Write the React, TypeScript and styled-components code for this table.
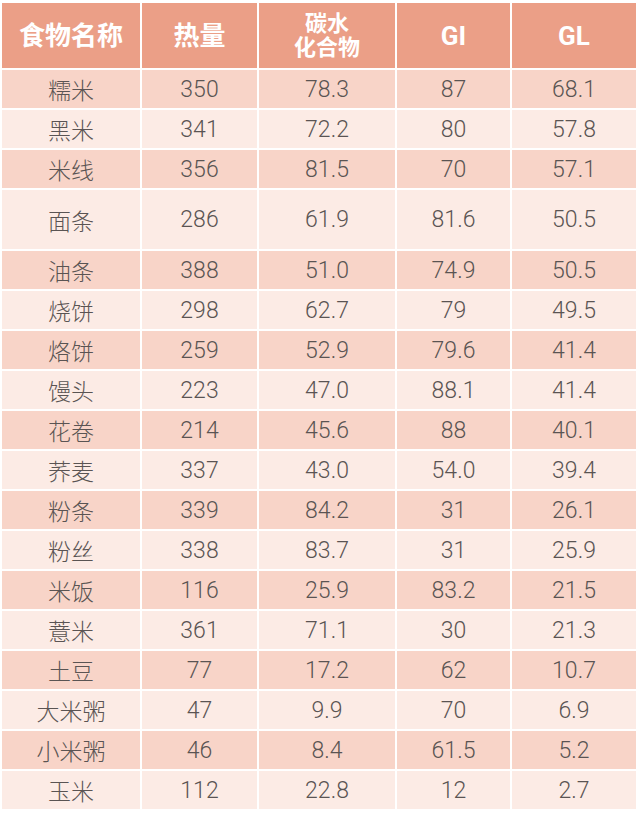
import React from 'react';
import styled, {createGlobalStyle} from 'styled-components';

const GlobalStyle = createGlobalStyle`
    body {
        margin: 0;
        background: #ffffff;
        font-family: Roboto, "Noto Sans CJK SC", sans-serif;
    }
`;

const Page = styled.div`
    width: 640px;
    height: 822px;
    padding: 3px 4px 0 2px;
    box-sizing: border-box;
    background: #ffffff;
`;

const Table = styled.div`
    display: grid;
    grid-template-columns: 138px 115px 136px 113px 124px;
    column-gap: 2px;
    row-gap: 2px;
`;

const HeadCell = styled.div<{small?: boolean}>`
    height: 65px;
    background: #eb9f87;
    color: #ffffff;
    font-weight: 700;
    font-size: ${p => (p.small ? '22px' : '26px')};
    line-height: ${p => (p.small ? '24px' : '1')};
    display: flex;
    align-items: center;
    justify-content: center;
    text-align: center;
    font-family: Roboto, "Noto Sans CJK SC", sans-serif;
`;

const Cell = styled.div<{dark: boolean; tall: boolean}>`
    height: ${p => (p.tall ? '59px' : '38px')};
    background: ${p => (p.dark ? '#f8d4c8' : '#fcebe5')};
    color: #5a5453;
    font-size: 23px;
    font-weight: 300;
    display: flex;
    align-items: center;
    justify-content: center;
    font-family: Roboto, "Noto Sans CJK SC", sans-serif;
`;

const NameCell = styled(Cell)`
    font-weight: 300;
    font-size: 23px;
`;

const rows: [string, string, string, string, string][] = [
    ['糯米', '350', '78.3', '87', '68.1'],
    ['黑米', '341', '72.2', '80', '57.8'],
    ['米线', '356', '81.5', '70', '57.1'],
    ['面条', '286', '61.9', '81.6', '50.5'],
    ['油条', '388', '51.0', '74.9', '50.5'],
    ['烧饼', '298', '62.7', '79', '49.5'],
    ['烙饼', '259', '52.9', '79.6', '41.4'],
    ['馒头', '223', '47.0', '88.1', '41.4'],
    ['花卷', '214', '45.6', '88', '40.1'],
    ['荞麦', '337', '43.0', '54.0', '39.4'],
    ['粉条', '339', '84.2', '31', '26.1'],
    ['粉丝', '338', '83.7', '31', '25.9'],
    ['米饭', '116', '25.9', '83.2', '21.5'],
    ['薏米', '361', '71.1', '30', '21.3'],
    ['土豆', '77', '17.2', '62', '10.7'],
    ['大米粥', '47', '9.9', '70', '6.9'],
    ['小米粥', '46', '8.4', '61.5', '5.2'],
    ['玉米', '112', '22.8', '12', '2.7'],
];

export default function App() {
    return (
        <Page>
            <GlobalStyle/>
            <Table>
                <HeadCell>食物名称</HeadCell>
                <HeadCell>热量</HeadCell>
                <HeadCell small>碳水<br/>化合物</HeadCell>
                <HeadCell>GI</HeadCell>
                <HeadCell>GL</HeadCell>
                {rows.map((r, i) => {
                    const dark = i % 2 === 0;
                    const tall = r[0] === '面条';
                    return (
                        <React.Fragment key={r[0]}>
                            <NameCell dark={dark} tall={tall}>{r[0]}</NameCell>
                            <Cell dark={dark} tall={tall}>{r[1]}</Cell>
                            <Cell dark={dark} tall={tall}>{r[2]}</Cell>
                            <Cell dark={dark} tall={tall}>{r[3]}</Cell>
                            <Cell dark={dark} tall={tall}>{r[4]}</Cell>
                        </React.Fragment>
                    );
                })}
            </Table>
        </Page>
    );
}
